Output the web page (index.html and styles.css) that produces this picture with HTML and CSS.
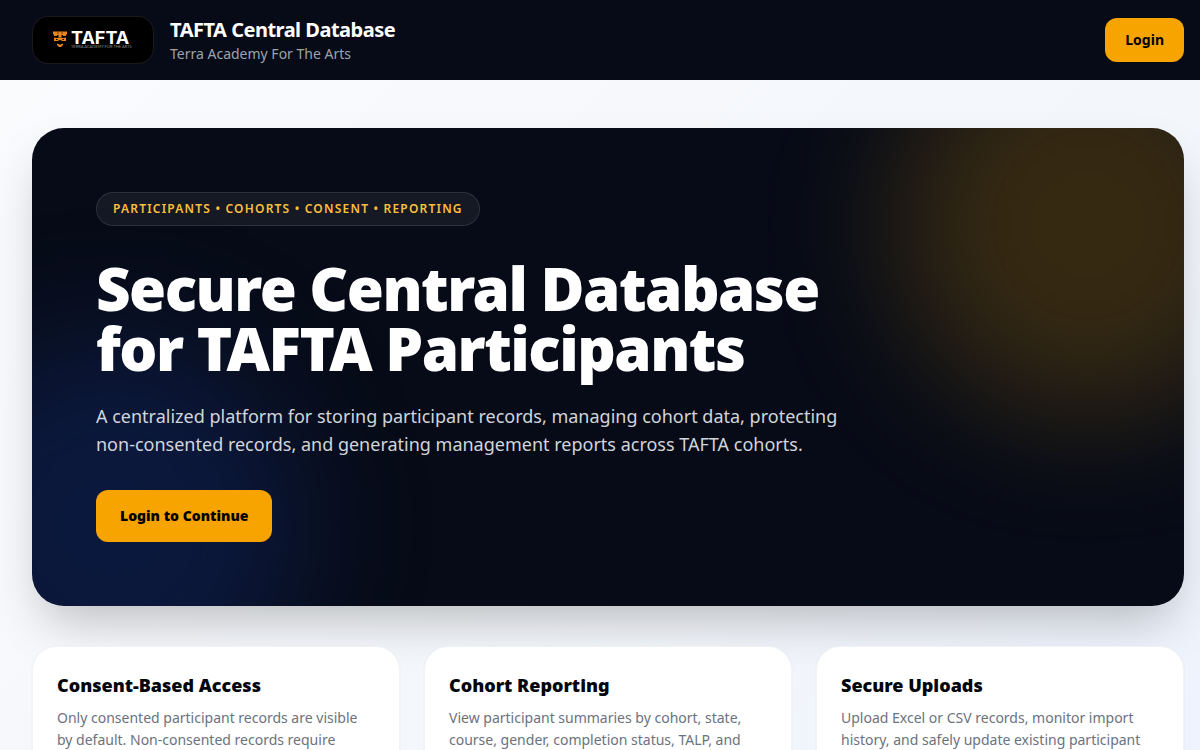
FILE: index.html
```html
<!DOCTYPE html>
<html lang="en">
<head>
  <meta charset="UTF-8">
  <meta name="viewport" content="width=device-width, initial-scale=1">
  <title>TAFTA Central Database</title>
  <link rel="stylesheet" href="styles.css">
</head>
<body>

  <!-- Header -->
  <header class="site-header">
    <div class="brand">
      <div class="logo">
        <svg width="80" height="24" viewBox="0 0 80 24" role="img" aria-label="TAFTA">
          <g fill="#e8861c">
            <path d="M0 3.500h14v3h-1v1.500h-3V7H8.500v2.500h-3V7H4v1H1V6.500H0z"/>
            <path d="M1 9.500l3 .5 3-.5 3 .5 3-.5v3.500h-3.500L7 12l-2.500 1H1z"/>
            <path d="M4 15.500l3 1.200 3-1.200v1.500L8 19H6l-2-2z"/>
          </g>
          <g fill="#000">
            <path d="M4.500 4.500h1v1h-1zM8.500 4.500h1v1h-1zM3 11h1.500v1H3zM9.500 11H11v1H9.500z"/>
          </g>
          <text class="logo-name" x="18" y="16">TAFTA</text>
          <text class="logo-tag" x="18" y="20">TERRA ACADEMY FOR THE ARTS</text>
        </svg>
      </div>
      <div>
        <div class="brand-title">TAFTA Central Database</div>
        <div class="brand-subtitle">Terra Academy For The Arts</div>
      </div>
    </div>
    <a href="#login" class="btn">Login</a>
  </header>

  <main class="page">
    <!-- Hero -->
    <section class="hero">
      <div class="glow glow-gold"></div>
      <div class="glow glow-blue"></div>
      <div class="hero-content">
        <div class="pill">PARTICIPANTS • COHORTS • CONSENT • REPORTING</div>
        <h1>Secure Central Database for TAFTA Participants</h1>
        <p>A centralized platform for storing participant records, managing cohort data, protecting non-consented records, and generating management reports across TAFTA cohorts.</p>
        <a href="#login" class="btn btn-large">Login to Continue</a>
      </div>
    </section>

    <!-- Features -->
    <section class="features">
      <div class="card">
        <h2>Consent-Based Access</h2>
        <p>Only consented participant records are visible by default. Non-consented records require</p>
      </div>
      <div class="card">
        <h2>Cohort Reporting</h2>
        <p>View participant summaries by cohort, state, course, gender, completion status, TALP, and</p>
      </div>
      <div class="card">
        <h2>Secure Uploads</h2>
        <p>Upload Excel or CSV records, monitor import history, and safely update existing participant</p>
      </div>
    </section>
  </main>

</body>
</html>
```
FILE: styles.css
```css
* {
  box-sizing: border-box;
}

body {
  margin: 0;
  min-height: 100vh;
  font-family: "Noto Sans", sans-serif;
  color: #03050c;
  background: linear-gradient(135deg, #fafbfd, #f3f6fb 65%, #edf2fd);
}

h1, h2, p {
  margin: 0;
}

/* Header */
.site-header {
  display: flex;
  align-items: center;
  justify-content: space-between;
  height: 80px;
  padding: 0 16px 0 32px;
  background: #070b17;
}

.brand {
  display: flex;
  align-items: center;
  gap: 16px;
}

.logo {
  display: flex;
  align-items: center;
  justify-content: center;
  width: 122px;
  height: 48px;
  background: #000;
  border: 1px solid rgba(255, 255, 255, 0.1);
  border-radius: 16px;
}

.logo-name {
  font-family: Inter, sans-serif;
  font-size: 18px;
  font-weight: 700;
  fill: #fff;
}

.logo-tag {
  font-family: Lato, sans-serif;
  font-size: 4px;
  fill: #888;
}

.brand-title {
  font-size: 20px;
  line-height: 28px;
  font-weight: 700;
  letter-spacing: -0.025em;
  color: #fff;
}

.brand-subtitle {
  font-size: 14px;
  line-height: 20px;
  color: #9ca3af;
}

.btn {
  display: inline-block;
  padding: 12px 20px;
  border-radius: 12px;
  background: #f7a400;
  color: #000;
  font-size: 14px;
  line-height: 20px;
  font-weight: 700;
  text-decoration: none;
}

.btn-large {
  padding: 16px 24px;
  font-weight: 900;
}

/* Hero */
.page {
  padding: 48px 16px 48px 32px;
}

.hero {
  position: relative;
  overflow: hidden;
  padding: 64px;
  border-radius: 32px;
  background: #070b17;
  box-shadow: 0 25px 50px -12px rgba(0, 0, 0, 0.25);
}

.glow {
  position: absolute;
  width: 384px;
  height: 384px;
  border-radius: 50%;
  filter: blur(64px);
}

.glow-gold {
  top: -96px;
  right: -96px;
  background: rgba(247, 164, 0, 0.2);
}

.glow-blue {
  bottom: -112px;
  left: -112px;
  background: rgba(29, 78, 216, 0.2);
}

.hero-content {
  position: relative;
  max-width: 768px;
}

.pill {
  display: inline-block;
  padding: 8px 16px;
  border: 1px solid rgba(255, 255, 255, 0.1);
  border-radius: 17px;
  background: rgba(255, 255, 255, 0.06);
  color: #fbbf3c;
  font-size: 12px;
  line-height: 16px;
  font-weight: 600;
  letter-spacing: 0.1em;
  vertical-align: top;
}

.hero h1 {
  margin-top: 32px;
  color: #fff;
  font-size: 60px;
  line-height: 60px;
  font-weight: 900;
  letter-spacing: -0.025em;
}

.hero p {
  margin: 24px 0 32px;
  color: #d1d5db;
  font-size: 18px;
  line-height: 28px;
}

.hero .btn {
  vertical-align: top;
}

/* Features */
.features {
  display: grid;
  grid-template-columns: repeat(3, 1fr);
  gap: 24px;
  margin-top: 40px;
}

.card {
  position: relative;
  padding: 24px;
  background: #fff;
  border: 1px solid #f1f3f7;
  border-radius: 24px;
  box-shadow: 0 1px 3px rgba(0, 0, 0, 0.05);
}

.card h2 {
  font-size: 18px;
  line-height: 28px;
  font-weight: 900;
}

.card p {
  margin-top: 8px;
  color: #6b7280;
  font-size: 14px;
  line-height: 22px;
}

@media (max-width: 800px) {
  .hero {
    padding: 32px;
  }

  .hero h1 {
    font-size: 40px;
    line-height: 44px;
  }

  .features {
    grid-template-columns: 1fr;
  }
}
```
